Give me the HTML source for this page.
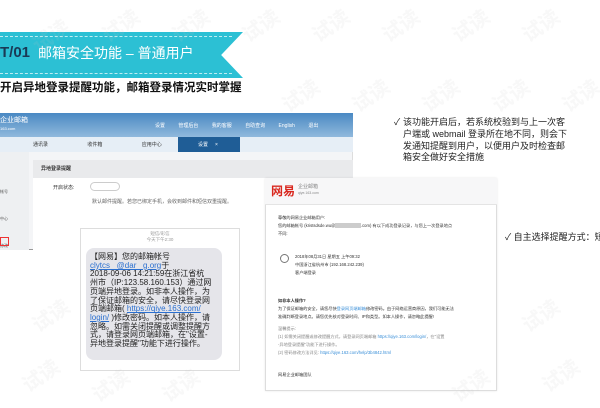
<!DOCTYPE html>
<html><head><meta charset="utf-8"><style>
*{margin:0;padding:0;box-sizing:border-box}
body{width:600px;height:400px;overflow:hidden;background:#fff;font-family:"Liberation Sans","Noto Sans CJK SC",sans-serif;position:relative}
.a{position:absolute}
.wm{position:absolute;color:rgba(200,200,200,0.12);font-size:20px;font-weight:bold;transform:rotate(-35deg);white-space:nowrap}
</style></head><body>

<!-- banner -->
<div class="a" style="left:0;top:32px;width:243px;height:46px;background:#2cc0d4;clip-path:polygon(0 0,100% 0,91% 50%,100% 100%,0 100%)"></div>
<div class="a" style="left:0;top:36px;width:232px;height:38px;border-top:1px dashed rgba(255,255,255,.7);border-bottom:1px dashed rgba(255,255,255,.7)"></div>
<div class="a" style="left:0;top:41px;color:#1a3a55;font-size:15px;font-weight:bold;line-height:24px">T/01</div>
<div class="a" style="left:38px;top:41px;color:#fff;font-size:14px;line-height:24px;white-space:nowrap">邮箱安全功能 – 普通用户</div>
<div class="a" style="left:0;top:78px;font-size:11.5px;font-weight:bold;color:#111;line-height:20px;white-space:nowrap">开启异地登录提醒功能，邮箱登录情况实时掌握</div>

<!-- screenshot 1 -->
<div class="a" style="left:0;top:113px;width:353px;height:137px;background:#f4f5f7;border-right:1px solid #ddd;border-bottom:1px solid #999"></div>
<div class="a" style="left:0;top:113px;width:353px;height:39px;background:linear-gradient(#4a89c3,#bcd6ec)"></div>
<div class="a" style="left:0;top:117px;color:#fff;font-size:7px;line-height:8px">企业邮箱<br><span style="font-size:4px">163.com</span></div>
<div class="a" style="left:155px;top:122px;color:#fff;font-size:5px;word-spacing:12px">设置 管理后台 我的客服 自助查询 English 退出</div>
<div class="a" style="left:0;top:137px;width:353px;height:15px;background:#e6eef6"></div>
<div class="a" style="left:33px;top:141px;font-size:5px;color:#333;word-spacing:38px">通讯录 收件箱 应用中心</div>
<div class="a" style="left:178px;top:137px;width:62px;height:15px;background:#1f5d96;color:#fff;font-size:5px;padding:4px 0 0 20px">设置 &nbsp; &nbsp; ×</div>
<div class="a" style="left:0;top:152px;width:29px;height:98px;background:#eef0f2"></div>
<div class="a" style="left:0;top:178px;font-size:4px;color:#555;line-height:27px">帐号<br>中心<br>修改</div>
<div class="a" style="left:0;top:237px;width:9px;height:9px;border:1.5px solid #e33"></div>
<div class="a" style="left:33px;top:160px;width:320px;height:18px;background:#e9eaec;font-size:5px;font-weight:bold;padding:5px 8px;color:#333">异地登录提醒</div>
<div class="a" style="left:33px;top:178px;width:320px;height:72px;background:#fff"></div>
<div class="a" style="left:53px;top:184px;font-size:5px;color:#333">开启状态:</div>
<div class="a" style="left:90px;top:182px;width:30px;height:9px;border:1px solid #ccc;border-radius:5px"></div>
<div class="a" style="left:92px;top:198px;font-size:5px;color:#666">默认邮件提醒。若您已绑定手机，会收到邮件和短信双重提醒。</div>

<!-- sms card -->
<div class="a" style="left:80px;top:228px;width:160px;height:143px;background:#fff;border:1px solid #ddd"></div>
<div class="a" style="left:80px;top:231px;width:160px;text-align:center;font-size:4.5px;color:#999;line-height:6px">短信/彩信<br>今天下午2:30</div>
<div class="a" style="left:86px;top:248px;width:136px;height:112px;background:#e5e5ea;border-radius:8px"></div>
<div class="a" style="left:90px;top:253px;width:132px;font-size:8px;line-height:8.7px;color:#222;white-space:nowrap">【网易】您的邮箱帐号<br><span style="color:#2a6fcf;text-decoration:underline">clytcs&nbsp; &nbsp;@dar&nbsp; &nbsp;g.org</span>于<br>2018-09-06 14:21:59在浙江省杭<br>州市（IP:123.58.160.153）通过网<br>页端异地登录。如非本人操作，为<br>了保证邮箱的安全，请尽快登录网<br>页端邮箱( <span style="color:#2a6fcf;text-decoration:underline">https://qiye.163.com/</span><br><span style="color:#2a6fcf;text-decoration:underline">login/</span> )修改密码。如本人操作，请<br>忽略。如需关闭提醒或调整提醒方<br>式，请登录网页端邮箱，在"设置-<br>异地登录提醒"功能下进行操作。</div>

<!-- email card -->
<div class="a" style="left:265px;top:178px;width:232px;height:213px;background:#fff;border:1px solid #ddd;box-shadow:0 0 2px rgba(0,0,0,.1)"></div>
<div class="a" style="left:265px;top:178px;width:232px;height:27px;background:#f7f7f8;border-bottom:1px solid #e4e4e4"></div>
<div class="a" style="left:271px;top:182px;font-size:12px;color:#d9281f;font-weight:bold">网易</div>
<div class="a" style="left:298px;top:184px;font-size:5px;color:#888;line-height:6px">企业邮箱<br><span style="font-size:3.5px">qiye.163.com</span></div>
<div class="a" style="left:278px;top:214px;width:212px;font-size:4.2px;line-height:8px;color:#333">尊敬的网易企业邮箱用户:<br>您的邮箱帐号 (kristsdsde.wu@<span style="background:#ccc">&nbsp;&nbsp;&nbsp;&nbsp;&nbsp;&nbsp;&nbsp;&nbsp;&nbsp;&nbsp;&nbsp;&nbsp;&nbsp;&nbsp;&nbsp;&nbsp;&nbsp;&nbsp;&nbsp;&nbsp;&nbsp;&nbsp;</span>.com) 有以下成功登录记录，与您上一次登录地点<br>不同:</div>
<div class="a" style="left:280px;top:254px;width:9px;height:9px;border:1px solid #777;border-radius:50%"></div>
<div class="a" style="left:295px;top:253px;font-size:4.2px;line-height:8px;color:#333">2018年08月31日 星期五 上午09:32<br>中国浙江省杭州市 (192.168.242.239)<br>客户端登录</div>
<div class="a" style="left:278px;top:297px;width:212px;font-size:4.2px;line-height:8px;color:#333"><b>如非本人操作?</b><br>为了保证邮箱的安全，请您尽快<span style="color:#3a8fd8">登录网页端邮箱</span>修改密码。由于网络运营商原因，我们可能无法<br>准确判断登录地点。请您优先核对登录时间、IP和类型。如本人操作，请忽略此提醒!</div>
<div class="a" style="left:278px;top:325px;width:212px;font-size:4.2px;line-height:8px;color:#888">温馨提示:<br>(1) 如需关闭提醒或修改提醒方式，请登录网页端邮箱 <span style="color:#3a8fd8">https://qiye.163.com/login/</span>，在"设置<br>-异地登录提醒"功能下进行操作。<br>(2) 密码修改方法详见: <span style="color:#3a8fd8">https://qiye.163.com/help/3b4842.html</span></div>
<div class="a" style="left:278px;top:372px;font-size:4.2px;color:#333">网易企业邮箱团队</div>

<!-- bullets -->
<div class="a" style="left:394px;top:117px;font-size:9px;line-height:11.8px;color:#222">✓</div>
<div class="a" style="left:403px;top:117px;width:190px;font-size:9px;line-height:11.8px;color:#222;white-space:nowrap">该功能开启后，若系统校验到与上一次客<br>户端或 webmail 登录所在地不同，则会下<br>发通知提醒到用户，以便用户及时检查邮<br>箱安全做好安全措施</div>
<div class="a" style="left:505px;top:230px;font-size:9px;color:#222;white-space:nowrap">✓ 自主选择提醒方式：短</div>

<!-- watermarks -->
<div class="wm" style="left:30px;top:20px">试读</div><div class="wm" style="left:100px;top:10px">试读</div><div class="wm" style="left:170px;top:10px">试读</div><div class="wm" style="left:240px;top:10px">试读</div><div class="wm" style="left:310px;top:10px">试读</div><div class="wm" style="left:380px;top:10px">试读</div><div class="wm" style="left:450px;top:10px">试读</div><div class="wm" style="left:520px;top:10px">试读</div>
<div class="wm" style="left:280px;top:80px">试读</div><div class="wm" style="left:350px;top:80px">试读</div><div class="wm" style="left:420px;top:80px">试读</div><div class="wm" style="left:490px;top:80px">试读</div><div class="wm" style="left:560px;top:80px">试读</div>
<div class="wm" style="left:30px;top:300px">试读</div><div class="wm" style="left:20px;top:360px">试读</div><div class="wm" style="left:90px;top:370px">试读</div><div class="wm" style="left:160px;top:370px">试读</div><div class="wm" style="left:520px;top:300px">试读</div><div class="wm" style="left:540px;top:360px">试读</div><div class="wm" style="left:450px;top:370px">试读</div>
</body></html>
